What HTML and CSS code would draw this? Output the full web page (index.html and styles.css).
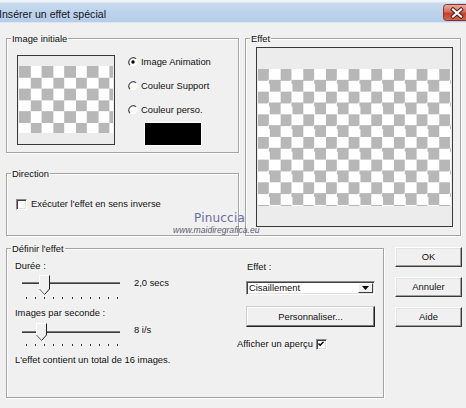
FILE: index.html
```html
<!DOCTYPE html>
<html lang="fr">
<head>
<meta charset="utf-8">
<title>Insérer un effet spécial</title>
<link rel="stylesheet" href="styles.css">
</head>
<body>
<div class="window">
  <div class="titlebar">
    <span class="title">Insérer un effet spécial</span>
    <svg class="close" width="27" height="17" viewBox="0 0 27 17">
      <defs>
        <linearGradient id="cg" x1="0" y1="0" x2="0" y2="1">
          <stop offset="0" stop-color="#eab1a8"/>
          <stop offset="0.45" stop-color="#d56c5c"/>
          <stop offset="0.55" stop-color="#c2412e"/>
          <stop offset="1" stop-color="#cf6a4f"/>
        </linearGradient>
      </defs>
      <rect x="0.5" y="0.5" width="30" height="16" rx="3" fill="url(#cg)" stroke="#8a3426"/>
      <path d="M10 5.5 L18 12.5 M18 5.5 L10 12.5" stroke="#4b1a12" stroke-width="4" stroke-linecap="square" fill="none"/>
      <path d="M10 5.5 L18 12.5 M18 5.5 L10 12.5" stroke="#fff" stroke-width="2.2" stroke-linecap="square" fill="none"/>
    </svg>
  </div>

  <div class="main">
    <div class="top">
      <div class="leftcol">
        <div class="group g-init">
          <span class="legend">Image initiale</span>
          <div class="init-row">
            <div class="preview small"><div class="checker"></div></div>
            <div class="radios">
              <div class="radio">
                <svg width="10" height="10" viewBox="0 0 10 10"><circle cx="5" cy="5" r="4.4" fill="#fbfbfb"/><path d="M1.9 8.1 A4.4 4.4 0 0 1 8.1 1.9" stroke="#505050" stroke-width="1.2" fill="none"/><circle cx="5" cy="5" r="1.7" fill="#000"/></svg>
                <span>Image Animation</span>
              </div>
              <div class="radio">
                <svg width="10" height="10" viewBox="0 0 10 10"><circle cx="5" cy="5" r="4.4" fill="#fbfbfb"/><path d="M1.9 8.1 A4.4 4.4 0 0 1 8.1 1.9" stroke="#505050" stroke-width="1.2" fill="none"/></svg>
                <span>Couleur Support</span>
              </div>
              <div class="radio">
                <svg width="10" height="10" viewBox="0 0 10 10"><circle cx="5" cy="5" r="4.4" fill="#fbfbfb"/><path d="M1.9 8.1 A4.4 4.4 0 0 1 8.1 1.9" stroke="#505050" stroke-width="1.2" fill="none"/></svg>
                <span>Couleur perso.</span>
              </div>
              <div class="swatch"></div>
            </div>
          </div>
        </div>

        <div class="group g-dir">
          <span class="legend">Direction</span>
          <div class="check-row">
            <span class="box"></span>
            <span>Exécuter l'effet en sens inverse</span>
          </div>
        </div>
      </div>

      <div class="group g-effet">
        <span class="legend">Effet</span>
        <div class="preview big"><div class="checker"></div></div>
      </div>
    </div>

    <div class="bottom">
      <div class="group g-def">
        <span class="legend">Définir l'effet</span>
        <div class="def-row">
          <div class="sliders">
            <div class="lbl">Durée :</div>
            <div class="slider-row s1">
              <svg width="104" height="26" viewBox="0 0 104 26">
                <rect x="4" y="8" width="98" height="1" fill="#7a7a7a"/>
                <rect x="4" y="9" width="98" height="1" fill="#3c3c3c"/>
                <polygon points="21.5,1.5 31.5,1.5 31.5,15 26.5,20.5 21.5,15" fill="#f0f0f0"/>
                <polyline points="21.5,15 21.5,1.5 31.5,1.5" stroke="#fff" fill="none"/>
                <polyline points="31.5,1.5 31.5,15 26.5,20.5" stroke="#1e1e1e" fill="none"/>
                <line x1="21.5" y1="15" x2="26.5" y2="20.5" stroke="#6a6a6a"/>
                <g fill="#333">
                  <rect x="8" y="23" width="1" height="2"/><rect x="17" y="23" width="1" height="2"/><rect x="26" y="23" width="1" height="2"/><rect x="35" y="23" width="1" height="2"/><rect x="44" y="23" width="1" height="2"/><rect x="54" y="23" width="1" height="2"/><rect x="63" y="23" width="1" height="2"/><rect x="72" y="23" width="1" height="2"/><rect x="81" y="23" width="1" height="2"/><rect x="90" y="23" width="1" height="2"/><rect x="99" y="23" width="1" height="2"/>
                </g>
              </svg>
              <span class="val">2,0 secs</span>
            </div>
            <div class="lbl lbl2">Images par seconde :</div>
            <div class="slider-row s2">
              <svg width="104" height="26" viewBox="0 0 104 26">
                <rect x="4" y="8" width="98" height="1" fill="#7a7a7a"/>
                <rect x="4" y="9" width="98" height="1" fill="#3c3c3c"/>
                <polygon points="18.5,0.5 28.5,0.5 28.5,12 23.5,17.5 18.5,12" fill="#f0f0f0"/>
                <polyline points="18.5,12 18.5,0.5 28.5,0.5" stroke="#fff" fill="none"/>
                <polyline points="28.5,0.5 28.5,12 23.5,17.5" stroke="#1e1e1e" fill="none"/>
                <line x1="18.5" y1="12" x2="23.5" y2="17.5" stroke="#6a6a6a"/>
                <g fill="#333">
                  <rect x="8" y="21" width="1" height="2"/><rect x="17" y="21" width="1" height="2"/><rect x="26" y="21" width="1" height="2"/><rect x="35" y="21" width="1" height="2"/><rect x="44" y="21" width="1" height="2"/><rect x="54" y="21" width="1" height="2"/><rect x="63" y="21" width="1" height="2"/><rect x="72" y="21" width="1" height="2"/><rect x="81" y="21" width="1" height="2"/><rect x="90" y="21" width="1" height="2"/><rect x="99" y="21" width="1" height="2"/>
                </g>
              </svg>
              <span class="val">8 i/s</span>
            </div>
            <div class="lbl total">L'effet contient un total de 16 images.</div>
          </div>

          <div class="effect-side">
            <div class="lbl eff-lbl">Effet :</div>
            <div class="select">
              <span class="sel-text">Cisaillement</span>
              <span class="drop">
                <svg width="7" height="4" viewBox="0 0 7 4"><polygon points="0,0 7,0 3.5,4" fill="#000"/></svg>
              </span>
            </div>
            <div class="btn pers">Personnaliser...</div>
            <div class="apercu-row">
              <span>Afficher un aperçu</span>
              <span class="box checked">
                <svg width="8" height="8" viewBox="0 0 8 8"><path d="M1.5 3.5 L3.2 5.3 L6.5 1.8" stroke="#000" stroke-width="1.4" fill="none"/></svg>
              </span>
            </div>
          </div>
        </div>
      </div>

      <div class="buttons">
        <div class="btn">OK</div>
        <div class="btn">Annuler</div>
        <div class="btn">Aide</div>
      </div>
    </div>
  </div>

  <div class="watermark">
    <span class="wm-name">Pinuccia</span>
    <span class="wm-url">www.maidiregrafica.eu</span>
  </div>
</div>
</body>
</html>
```

FILE: styles.css
```css
* {
  box-sizing: border-box;
  margin: 0;
  padding: 0;
}

html, body {
  width: 466px;
  height: 408px;
  overflow: hidden;
}

body {
  background: #f0f0f0;
  font-family: "Liberation Sans", Arial, sans-serif;
  font-size: 9.4px;
  line-height: 14px;
  color: #111;
}

.window {
  position: relative;
  width: 466px;
  height: 408px;
  overflow: hidden;
  background: #f0f0f0;
}

/* Title bar */
.titlebar {
  height: 23px;
  display: flex;
  justify-content: space-between;
  align-items: flex-start;
  background: linear-gradient(#eef3f8 0, #eef3f8 2px, #c9dbef 3px, #bcd2ec 60%, #b6cdea 100%);
  border-bottom: 1px solid #dce7f3;
}

.title {
  margin: 6px 0 0 -1px;
  font-size: 10.6px;
  line-height: 16px;
  color: #151515;
}

.close {
  display: block;
  margin: 4px -4px 0 0;
}

/* Main area */
.main {
  padding: 15px 0 0 6px;
}

.top {
  display: flex;
  gap: 6px;
}

.leftcol {
  width: 233px;
  display: flex;
  flex-direction: column;
  gap: 20px;
}

.group {
  border: 1px solid #a3a3a3;
  box-shadow: inset 1px 1px 0 #fff, 1px 1px 0 #fff;
}

.legend {
  display: block;
  width: max-content;
  height: 11px;
  margin: -6px 0 0 4px;
  padding: 0 1px;
  line-height: 11px;
  background: #f0f0f0;
}

.g-init {
  height: 115px;
}

.g-dir {
  height: 63px;
}

.g-effet {
  width: 216px;
  height: 198px;
}

/* Previews */
.preview {
  display: flex;
  flex-direction: column;
  background: #ececec;
  border: 1px solid #3a3a3a;
}

.checker {
  flex: 1;
  background-color: #fff;
  background-image: conic-gradient(#fff 0 25%, #b7b7b7 0 50%, #fff 0 75%, #b7b7b7 0);
  background-size: 22.6px 22.6px;
}

.preview.small {
  width: 98px;
  height: 90px;
  padding: 10px 1px 11px;
}

.preview.big {
  width: 197px;
  height: 180px;
  margin: 3px 0 0 10px;
  padding: 21px 1px 20px;
}

.preview.big .checker {
  background-size: 22.67px 22.67px;
}

.init-row {
  display: flex;
  margin-top: 11px;
  padding-left: 10px;
}

.radios {
  margin-left: 13px;
  display: flex;
  flex-direction: column;
  gap: 10px;
}

.radio {
  display: flex;
  align-items: center;
  height: 14px;
  gap: 3px;
}

.radio svg {
  display: block;
}

.swatch {
  width: 56px;
  height: 22px;
  margin: -4px 0 0 17px;
  background: #000;
  box-shadow: 0 0 0 1px #fff;
}

/* Checkboxes */
.check-row {
  display: flex;
  align-items: center;
  height: 14px;
  margin: 18px 0 0 9px;
  gap: 4px;
}

.box {
  display: flex;
  align-items: center;
  justify-content: center;
  width: 11px;
  height: 11px;
  background: #fff;
  border: 1px solid;
  border-color: #8a8a8a #fff #fff #8a8a8a;
  box-shadow: inset 1px 1px 0 #404040, inset -1px -1px 0 #e0e0e0;
}

/* Bottom section */
.bottom {
  display: flex;
  align-items: flex-start;
  margin-top: 12px;
}

.g-def {
  width: 378px;
  height: 150px;
}

.def-row {
  display: flex;
  align-items: flex-start;
  padding-left: 8px;
  margin-top: 5px;
}

.sliders {
  width: 222px;
}

.lbl {
  height: 14px;
}

.slider-row {
  display: flex;
  align-items: flex-start;
}

.slider-row svg {
  display: block;
  margin-left: 3px;
}

.val {
  margin-left: 12px;
}

.s1 {
  margin-top: 1px;
}

.s1 .val {
  margin-top: 2px;
}

.lbl2 {
  margin-top: 6px;
}

.s2 {
  margin-top: 3px;
}

.total {
  margin-top: 4px;
}

.effect-side {
  margin-top: 1px;
  display: flex;
  flex-direction: column;
  align-items: flex-start;
}

.eff-lbl {
  margin-left: 10px;
}

.select {
  display: flex;
  align-items: center;
  justify-content: space-between;
  width: 129px;
  height: 14px;
  margin: 7px 0 0 9px;
  background: #fff;
  border: 1px solid;
  border-color: #8a8a8a #fff #fff #8a8a8a;
  box-shadow: inset 1px 1px 0 #404040, inset -1px -1px 0 #e0e0e0;
}

.sel-text {
  padding-left: 2px;
  line-height: 12px;
}

.drop {
  display: flex;
  align-items: center;
  justify-content: center;
  width: 15px;
  height: 10px;
  margin-right: 1px;
  background: #f0f0f0;
  border: 1px solid;
  border-color: #fff #404040 #404040 #fff;
}

.drop svg {
  display: block;
}

.btn {
  display: flex;
  align-items: center;
  justify-content: center;
  height: 20px;
  background: #f0f0f0;
  border: 1px solid;
  border-color: #fff #3a3a3a #3a3a3a #fff;
  box-shadow: inset -1px -1px 0 #a0a0a0, inset 1px 1px 0 #e3e3e3;
}

.btn.pers {
  width: 129px;
  height: 21px;
  margin: 11px 0 0 9px;
  border-color: #cfcfcf #222 #222 #cfcfcf;
  box-shadow: inset -1px -1px 0 #7a7a7a, inset 1px 1px 0 #fff;
}

.apercu-row {
  display: flex;
  align-items: center;
  height: 14px;
  margin-top: 10px;
  gap: 3px;
}

.box.checked svg {
  display: block;
}

.buttons {
  width: 67px;
  margin: -1px 0 0 11px;
  display: flex;
  flex-direction: column;
  gap: 10px;
}

/* Watermark overlay */
.watermark {
  position: absolute;
  left: 173px;
  top: 211px;
  display: flex;
  flex-direction: column;
  align-items: flex-start;
  pointer-events: none;
}

.wm-name {
  margin-left: 21px;
  font-family: "DejaVu Sans", sans-serif;
  font-size: 12px;
  line-height: 14px;
  letter-spacing: 0.2px;
  color: #6c6ca2;
}

.wm-url {
  font-family: "Liberation Sans", Arial, sans-serif;
  font-style: italic;
  font-size: 8.6px;
  line-height: 10px;
  color: #5c5c6c;
}
```
